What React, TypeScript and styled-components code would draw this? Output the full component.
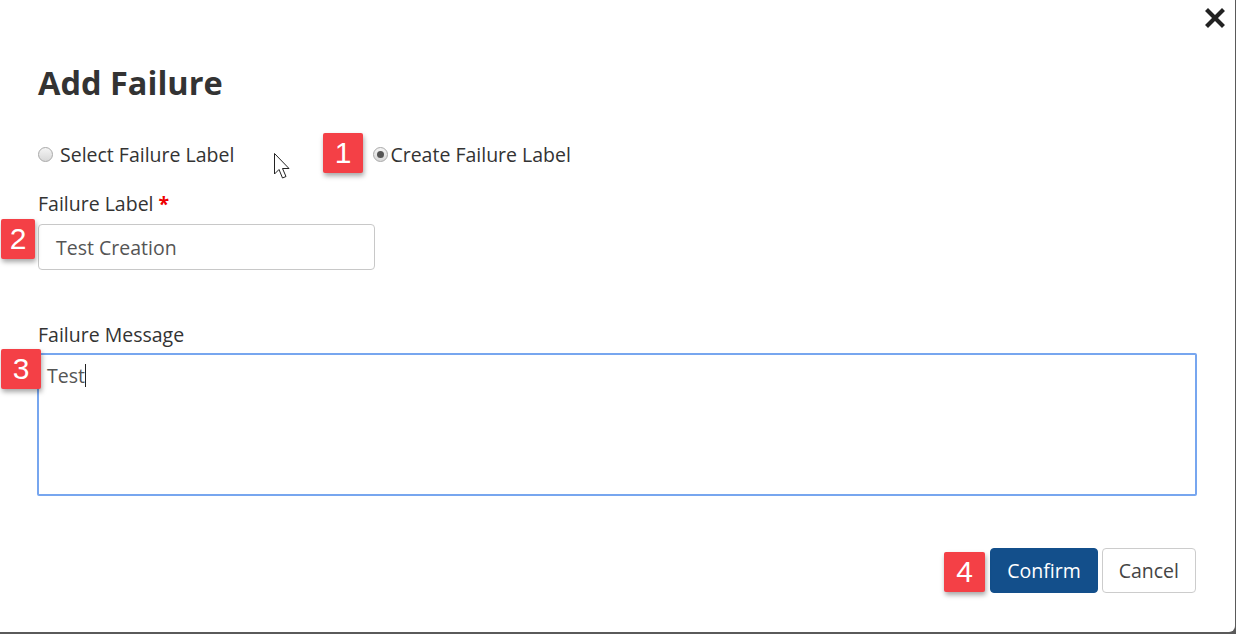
import { createGlobalStyle, styled } from "styled-components";

const GlobalStyle = createGlobalStyle`
  html, body {
    margin: 0;
    padding: 0;
    background: #5a5a5a;
  }
  body {
    font-family: "Open Sans", "Liberation Sans", sans-serif;
    color: #333;
  }
`;

const Modal = styled.div`
  position: relative;
  box-sizing: border-box;
  width: 1235px;
  height: 632px;
  padding: 63px 39px 0 38px;
  background: #fff;
  border-radius: 0 0 6px 0;
`;

const CloseButton = styled.button`
  position: absolute;
  top: 7px;
  right: 9px;
  width: 22px;
  height: 22px;
  padding: 0;
  border: 0;
  background: none;
  cursor: pointer;
`;

const Title = styled.h2`
  margin: 0;
  font-size: 32.5px;
  font-weight: 700;
  line-height: 40px;
  color: #333;
`;

const RadioRow = styled.div`
  display: flex;
  align-items: center;
  margin-top: 36px;
  height: 30px;
`;

const RadioOption = styled.label<{ $gap: number; $spacing?: number }>`
  display: flex;
  align-items: center;
  gap: ${(p) => p.$gap}px;
  margin-right: ${(p) => p.$spacing ?? 0}px;
  font-size: 19.5px;
  color: #333;
`;

const RadioDot = styled.span<{ $checked?: boolean }>`
  position: relative;
  box-sizing: border-box;
  width: 15px;
  height: 15px;
  border-radius: 50%;
  border: 1px solid #a9a9a9;
  background: linear-gradient(#f4f4f4, #d8d8d8);

  &::after {
    content: "";
    display: ${(p) => (p.$checked ? "block" : "none")};
    position: absolute;
    top: 3px;
    left: 3px;
    width: 7px;
    height: 7px;
    border-radius: 50%;
    background: #555;
  }
`;

const Field = styled.div<{ $top: number }>`
  display: flex;
  flex-direction: column;
  margin-top: ${(p) => p.$top}px;
`;

const Label = styled.div<{ $below?: number }>`
  font-size: 19.5px;
  line-height: 24px;
  color: #333;
  margin-bottom: ${(p) => p.$below ?? 8}px;
`;

const Required = styled.span`
  color: #e00;
  font-weight: 700;
  margin-left: 5px;
`;

const TextInput = styled.div`
  box-sizing: border-box;
  width: 337px;
  height: 46px;
  padding: 0 17px;
  display: flex;
  align-items: center;
  border: 1px solid #c8c8c8;
  border-radius: 4px;
  font-size: 19.5px;
  color: #555;
`;

const TextArea = styled.div`
  box-sizing: border-box;
  width: 1160px;
  height: 143px;
  margin-left: -1px;
  padding: 7px 8px;
  border: 2px solid #77a6ef;
  border-radius: 2px;
  font-size: 19.5px;
  line-height: 28px;
  color: #555;
`;

const Caret = styled.span`
  display: inline-block;
  width: 1px;
  height: 23px;
  background: #222;
  vertical-align: -4px;
`;

const Footer = styled.div`
  display: flex;
  justify-content: flex-end;
  gap: 4px;
  margin-top: 52px;
`;

const Button = styled.button<{ $primary?: boolean }>`
  box-sizing: border-box;
  height: 45px;
  padding: 0 16px;
  border-radius: 4px;
  font-family: "Open Sans", "Liberation Sans", sans-serif;
  font-size: 19.5px;
  border: 1px solid ${(p) => (p.$primary ? "#134f8b" : "#cccccc")};
  background: ${(p) => (p.$primary ? "#134f8b" : "#fff")};
  color: ${(p) => (p.$primary ? "#fff" : "#444")};
  cursor: pointer;
`;

const Marker = styled.div<{ $x: number; $y: number; $w?: number }>`
  position: absolute;
  left: ${(p) => p.$x}px;
  top: ${(p) => p.$y}px;
  width: ${(p) => p.$w ?? 40}px;
  height: 40px;
  display: flex;
  align-items: center;
  justify-content: center;
  background: #f44046;
  color: #fff;
  font-family: "Liberation Sans", Arial, sans-serif;
  font-size: 30px;
  border-radius: 2px;
  box-shadow: 1px 3px 5px rgba(0, 0, 0, 0.35);
`;

const Pointer = styled.svg`
  position: absolute;
  left: 273px;
  top: 152px;
`;

const markers = [
  { n: 1, x: 323, y: 133 },
  { n: 2, x: 1, y: 219, w: 34 },
  { n: 3, x: 1, y: 349 },
  { n: 4, x: 944, y: 552, w: 41 },
];

export default function App() {
  return (
    <>
      <GlobalStyle />
      <Modal>
        <CloseButton aria-label="Close">
          <svg width="22" height="22" viewBox="0 0 22 22">
            <path
              d="M4 4 L18 18 M18 4 L4 18"
              stroke="#222"
              strokeWidth="4.2"
              strokeLinecap="square"
            />
          </svg>
        </CloseButton>

        <Title>Add Failure</Title>

        <RadioRow>
          <RadioOption $gap={7} $spacing={139}>
            <RadioDot />
            Select Failure Label
          </RadioOption>
          <RadioOption $gap={2}>
            <RadioDot $checked />
            Create Failure Label
          </RadioOption>
        </RadioRow>

        <Field $top={23}>
          <Label>
            Failure Label<Required>*</Required>
          </Label>
          <TextInput>Test Creation</TextInput>
        </Field>

        <Field $top={53}>
          <Label $below={6}>Failure Message</Label>
          <TextArea>
            Test
            <Caret />
          </TextArea>
        </Field>

        <Footer>
          <Button $primary>Confirm</Button>
          <Button>Cancel</Button>
        </Footer>

        <Pointer width="20" height="30" viewBox="0 0 20 30">
          <path
            d="M1.5 1.5 L1.5 22 L6 17.5 L9.5 26 L13 24.5 L9.5 16.5 L16 16.5 Z"
            fill="#fff"
            stroke="#222"
            strokeWidth="1"
            strokeLinejoin="round"
          />
        </Pointer>

        {markers.map((m) => (
          <Marker key={m.n} $x={m.x} $y={m.y} $w={m.w}>
            {m.n}
          </Marker>
        ))}
      </Modal>
    </>
  );
}
